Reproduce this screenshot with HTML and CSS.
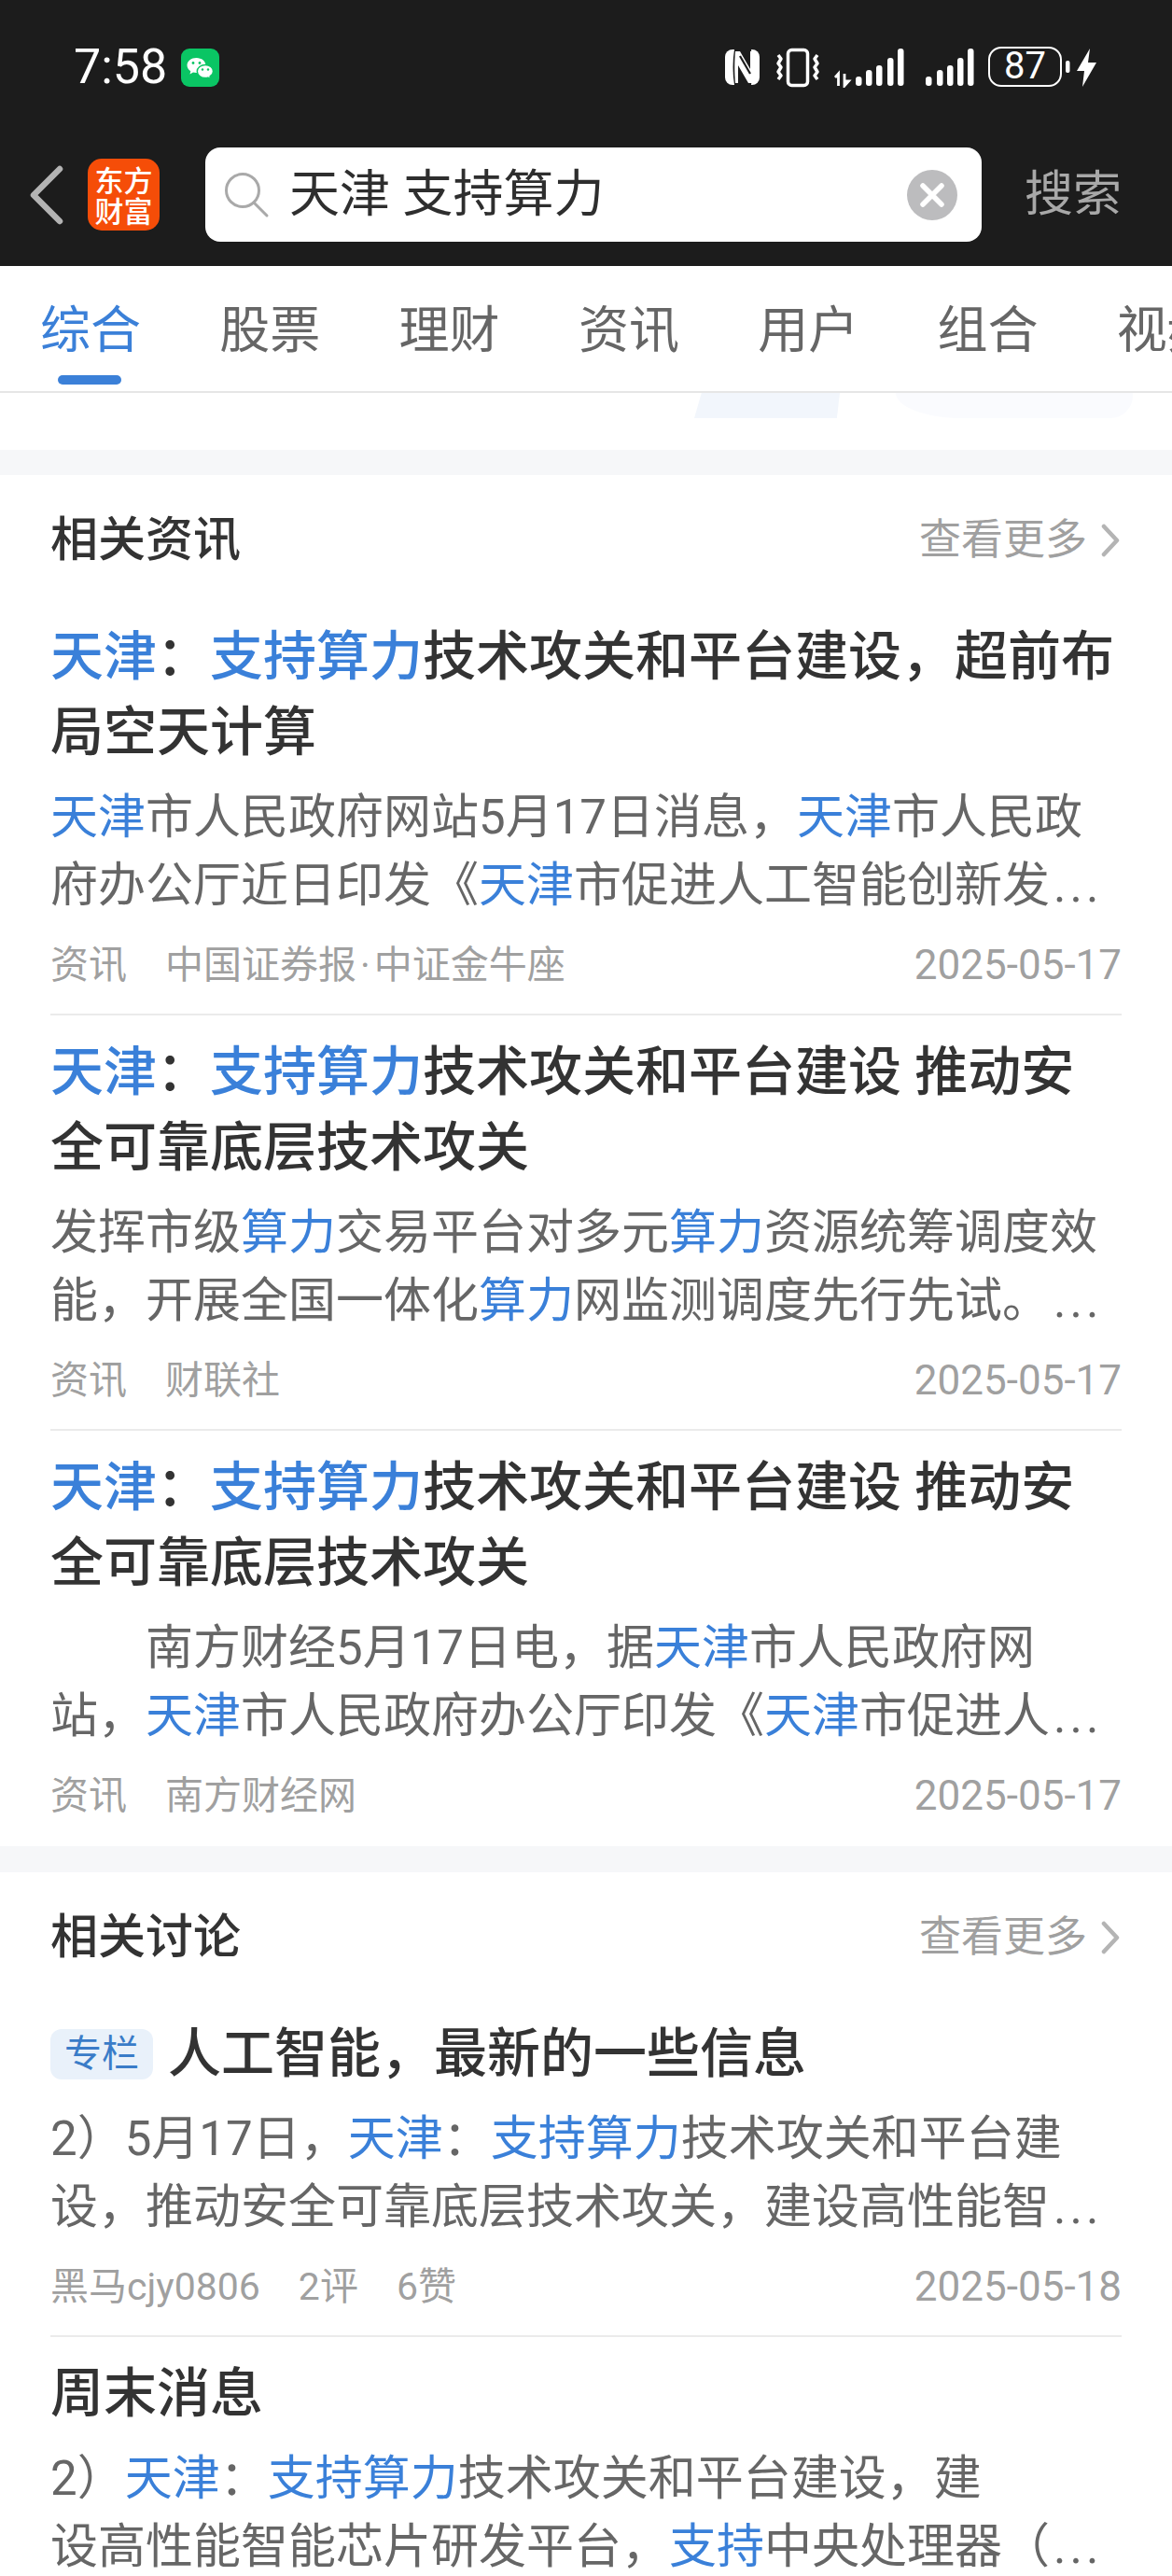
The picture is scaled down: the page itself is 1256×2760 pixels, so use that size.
FILE: index.html
```html
<!DOCTYPE html>
<html lang="zh-CN">
<head>
<meta charset="utf-8">
<title>搜索</title>
<link rel="stylesheet" href="styles.css">
</head>
<body>
<div class="page">
  <header class="top">
    <div class="status">
      <div class="status-left">
        <span class="clock">7:58</span>
        <svg class="wechat" width="41" height="41" viewBox="0 0 41 41">
          <rect width="41" height="41" rx="9" fill="#0ac564"/>
          <path d="M16.500 10c-5.500 0-10 3.500-10 8 0 2.600 1.500 4.800 3.800 6.300l-.8 3.200 3.500-1.900c1 .3 2.200.4 3.500.4 5.500 0 10-3.600 10-8s-4.500-8-10-8z" fill="#fff"/>
          <path d="M26 17.500c-4.800 0-8.700 3.100-8.700 7s3.900 7 8.700 7c1 0 1.900-.1 2.800-.4l3 1.600-.7-2.700c2-1.300 3.400-3.300 3.400-5.500 0-3.900-3.700-7-8.500-7z" fill="#fff" stroke="#0ac564" stroke-width="1.500"/>
          <circle cx="13" cy="15.500" r="1.400" fill="#0ac564"/><circle cx="20" cy="15.500" r="1.400" fill="#0ac564"/>
          <circle cx="23" cy="22.500" r="1.200" fill="#0ac564"/><circle cx="29" cy="22.500" r="1.200" fill="#0ac564"/>
        </svg>
      </div>
      <div class="status-right">
        <svg class="net" width="269" height="44" viewBox="778 50 269 44">
          <rect x="778" y="53" width="37" height="38" rx="8" fill="#fff"/>
          <path d="M788 53c-2 12-2 26 0 38h18c2-12 2-26 0-38z" fill="#1c1c1c"/>
          <path d="M789 55h5l11 19V55h3c1 10 1 24 0 34h-5L792 70v19h-3c-1-10-1-24 0-34z" fill="#fff"/>
          <path d="M794 60l11 19" stroke="#1c1c1c" stroke-width="2.200" fill="none"/>
          <path d="M835 59l3 4-3 5 3 4-3 5 3 4-3 4" stroke="#fff" stroke-width="3.500" fill="none" stroke-linejoin="round"/>
          <rect x="845.500" y="53.500" width="21" height="38" rx="4" fill="none" stroke="#fff" stroke-width="3.500"/>
          <path d="M877 59l-3 4 3 5-3 4 3 5-3 4 3 4" stroke="#fff" stroke-width="3.500" fill="none" stroke-linejoin="round"/>
          <path d="M899.500 92V79l-3.500 4M906 79v13l4.500-5h-4.500" stroke="#fff" stroke-width="2.800" fill="none"/>
          <rect x="918" y="82" width="6.500" height="10" rx="3" fill="#fff"/>
          <rect x="929" y="75" width="6.500" height="17" rx="3" fill="#fff"/>
          <rect x="940" y="70" width="6.500" height="22" rx="3" fill="#fff"/>
          <rect x="952" y="62" width="6.500" height="30" rx="3" fill="#fff"/>
          <rect x="963" y="52" width="6.500" height="40" rx="3" fill="#fff"/>
          <rect x="993" y="82" width="6.500" height="10" rx="3" fill="#fff"/>
          <rect x="1005" y="75" width="6.500" height="17" rx="3" fill="#fff"/>
          <rect x="1016" y="70" width="6.500" height="22" rx="3" fill="#fff"/>
          <rect x="1027" y="62" width="6.500" height="30" rx="3" fill="#fff"/>
          <rect x="1038" y="52" width="6.500" height="40" rx="3" fill="#fff"/>
        </svg>
        <span class="battery">87</span>
        <svg class="charge" width="34" height="44" viewBox="1143 50 34 44">
          <rect x="1143" y="65" width="4.500" height="13" rx="2" fill="#fff"/>
          <path d="M1169 52l-14 24h8l-2 17 15-26h-9z" fill="#fff"/>
        </svg>
      </div>
    </div>
    <div class="nav">
      <svg class="back" width="38" height="64" viewBox="0 0 38 64">
        <path d="M34 4L6 32l28 28" fill="none" stroke="#b3b3b3" stroke-width="6.500" stroke-linecap="round" stroke-linejoin="round"/>
      </svg>
      <div class="logo">东方<br>财富</div>
      <div class="search">
        <svg class="glass" width="50" height="50" viewBox="0 0 50 50">
          <circle cx="20" cy="20" r="17.500" fill="none" stroke="#a9a9a9" stroke-width="3"/>
          <path d="M32 33l14 14" stroke="#a9a9a9" stroke-width="3" stroke-linecap="round"/>
        </svg>
        <span class="query">天津 支持算力</span>
        <svg class="clear" width="54" height="54" viewBox="0 0 54 54">
          <circle cx="27" cy="27" r="27" fill="#bcbcbe"/>
          <path d="M17 17l20 20M37 17L17 37" stroke="#fff" stroke-width="5.500" stroke-linecap="round"/>
        </svg>
      </div>
      <span class="go">搜索</span>
    </div>
  </header>

  <nav class="tabs">
    <span class="tab active">综合</span>
    <span class="tab">股票</span>
    <span class="tab">理财</span>
    <span class="tab">资讯</span>
    <span class="tab">用户</span>
    <span class="tab">组合</span>
    <span class="tab">视频</span>
  </nav>

  <div class="peek">
    <div class="peek-a"></div>
    <div class="peek-b"></div>
  </div>

  <section class="block">
    <div class="block-head">
      <h2>相关资讯</h2>
      <div class="more"><span>查看更多</span>
        <svg width="20" height="36" viewBox="0 0 20 36"><path d="M3 3l14 15L3 33" fill="none" stroke="#b4b4b4" stroke-width="4.500" stroke-linecap="round" stroke-linejoin="round"/></svg>
      </div>
    </div>
    <article class="item">
      <h3><span class="line"><em>天津</em>：<em>支持算力</em>技术攻关和平台建设，超前布</span><span class="line">局空天计算</span></h3>
      <p><span class="line"><em>天津</em>市人民政府网站5月17日消息，<em>天津</em>市人民政</span><span class="line">府办公厅近日印发《<em>天津</em>市促进人工智能创新发<i>...</i></span></p>
      <div class="meta"><div class="meta-left"><span>资讯</span><span>中国证券报<b>·</b>中证金牛座</span></div><time>2025-05-17</time></div>
    </article>
    <article class="item">
      <h3><span class="line"><em>天津</em>：<em>支持算力</em>技术攻关和平台建设 推动安</span><span class="line">全可靠底层技术攻关</span></h3>
      <p><span class="line">发挥市级<em>算力</em>交易平台对多元<em>算力</em>资源统筹调度效</span><span class="line">能，开展全国一体化<em>算力</em>网监测调度先行先试。<i>...</i></span></p>
      <div class="meta"><div class="meta-left"><span>资讯</span><span>财联社</span></div><time>2025-05-17</time></div>
    </article>
    <article class="item last">
      <h3><span class="line"><em>天津</em>：<em>支持算力</em>技术攻关和平台建设 推动安</span><span class="line">全可靠底层技术攻关</span></h3>
      <p><span class="line">　　南方财经5月17日电，据<em>天津</em>市人民政府网</span><span class="line">站，<em>天津</em>市人民政府办公厅印发《<em>天津</em>市促进人<i>...</i></span></p>
      <div class="meta"><div class="meta-left"><span>资讯</span><span>南方财经网</span></div><time>2025-05-17</time></div>
    </article>
  </section>

  <section class="block">
    <div class="block-head">
      <h2>相关讨论</h2>
      <div class="more"><span>查看更多</span>
        <svg width="20" height="36" viewBox="0 0 20 36"><path d="M3 3l14 15L3 33" fill="none" stroke="#b4b4b4" stroke-width="4.500" stroke-linecap="round" stroke-linejoin="round"/></svg>
      </div>
    </div>
    <article class="item">
      <h3 class="tagged"><span class="tag">专栏</span><span class="line">人工智能，最新的一些信息</span></h3>
      <p><span class="line">2）5月17日，<em>天津</em>：<em>支持算力</em>技术攻关和平台建</span><span class="line">设，推动安全可靠底层技术攻关，建设高性能智<i>...</i></span></p>
      <div class="meta"><div class="meta-left"><span>黑马cjy0806</span><span>2评</span><span>6赞</span></div><time>2025-05-18</time></div>
    </article>
    <article class="item last">
      <h3><span class="line">周末消息</span></h3>
      <p><span class="line">2）<em>天津</em>：<em>支持算力</em>技术攻关和平台建设，建</span><span class="line">设高性能智能芯片研发平台，<em>支持</em>中央处理器（<i>...</i></span></p>
    </article>
  </section>
</div>
</body>
</html>
```

FILE: styles.css
```css
* { box-sizing: border-box; }
html, body { margin: 0; padding: 0; background: #fff; }
.page {
  width: 1256px;
  height: 2760px;
  overflow: hidden;
  background: #f6f7f9;
  font-family: Roboto, "Noto Sans CJK SC", sans-serif;
}

/* header */
.top { background: #1c1c1c; height: 285px; }
.status {
  height: 158px;
  padding: 50px 80px 0 79px;
  display: flex;
  justify-content: space-between;
  align-items: flex-start;
}
.status-left { display: flex; align-items: center; gap: 15px; height: 44px; }
.clock { color: #fff; font-size: 52px; line-height: 44px; }
.wechat { display: block; }
.status-right { display: flex; align-items: flex-start; }
.net, .charge { display: block; flex: none; }
.battery {
  flex: none;
  width: 79px;
  height: 43px;
  margin: 0 4px 0 13px;
  border: 2.500px solid #fff;
  border-radius: 14px;
  color: #fff;
  font-size: 40px;
  line-height: 38px;
  text-align: center;
}

.nav { display: flex; align-items: center; height: 101px; padding-left: 30px; }
.back { display: block; flex: none; }
.logo {
  width: 77px;
  height: 77px;
  margin-left: 26px;
  border-radius: 15px;
  background: #f54d08;
  color: #fff;
  font-family: "Noto Sans CJK SC", sans-serif;
  font-size: 31px;
  line-height: 33px;
  font-weight: 500;
  text-align: center;
  padding-top: 5px;
  flex: none;
}
.search {
  width: 832px;
  height: 101px;
  margin-left: 49px;
  background: #fff;
  border-radius: 16px;
  display: flex;
  align-items: center;
  padding: 0 26px 0 20px;
  flex: none;
}
.glass { flex: none; }
.query {
  flex: 1;
  margin-left: 20px;
  font-size: 54px;
  line-height: 70px;
  color: #2e2e2e;
  white-space: nowrap;
}
.clear { flex: none; }
.go { margin-left: 46px; font-size: 52px; line-height: 72px; color: #a8a8a8; flex: none; white-space: nowrap; }

/* tabs */
.tabs {
  height: 136px;
  background: #fff;
  border-bottom: 2px solid #e6e6e6;
  display: flex;
  gap: 84.300px;
  padding-left: 43px;
  overflow: hidden;
  font-size: 54px;
  color: #666;
}
.tab { flex: none; line-height: 140px; height: 134px; position: relative; white-space: nowrap; }
.tab.active { color: #3b80d8; }
.tab.active::after {
  content: "";
  position: absolute;
  left: 19px;
  width: 68px;
  bottom: 7px;
  height: 10px;
  border-radius: 5px;
  background: #3b80d8;
}

.peek { height: 61px; background: #fff; position: relative; margin-bottom: 27px; }
.peek-a {
  position: absolute;
  left: 744px;
  top: 0;
  width: 156px;
  height: 27px;
  background: #f2f6fc;
  clip-path: polygon(5% 0, 100% 0, 98% 100%, 0 100%);
}
.peek-b {
  position: absolute;
  left: 960px;
  top: 0;
  width: 254px;
  height: 27px;
  background: #fafbfe;
  border-radius: 0 0 24px 70px / 0 0 24px 27px;
}

/* blocks */
.block { background: #fff; padding: 0 54px; margin-bottom: 28px; }
.block-head { height: 134px; padding-top: 6px; display: flex; justify-content: space-between; align-items: center; }
h2 { margin: 0; font-size: 51px; font-weight: 500; color: #333; line-height: 70px; }
.more { display: flex; align-items: center; gap: 15px; font-size: 45px; color: #a0a0a0; line-height: 60px; }
.more svg { display: block; margin-right: 2px; }

.item { padding: 20px 0 22px; border-bottom: 2px solid #ebebeb; }
.item.last { border-bottom-color: transparent; }
.line { display: block; white-space: nowrap; }
h3 { margin: 0; font-size: 57px; font-weight: 500; line-height: 81px; color: #333; }
h3.tagged { display: flex; align-items: center; gap: 16px; }
.tag {
  flex: none;
  width: 110px;
  height: 54px;
  border-radius: 12px;
  background: #e9f1fa;
  color: #3a7cc8;
  font-size: 40px;
  font-weight: 400;
  line-height: 54px;
  text-align: center;
}
em { font-style: normal; color: #3a80d9; }
p { margin: 14px 0 0; font-size: 51px; line-height: 73px; color: #666; }
p i { font-style: normal; letter-spacing: 4px; margin-left: 4px; }
.meta {
  margin-top: 19px;
  height: 60px;
  display: flex;
  justify-content: space-between;
  align-items: center;
  font-size: 41px;
  color: #a0a0a0;
}
.meta b { font-weight: 400; margin: 0 4px; }
.meta-left { display: flex; gap: 41px; }
.meta span, .meta time { line-height: 60px; white-space: nowrap; }
.meta time { font-size: 44px; }
```
